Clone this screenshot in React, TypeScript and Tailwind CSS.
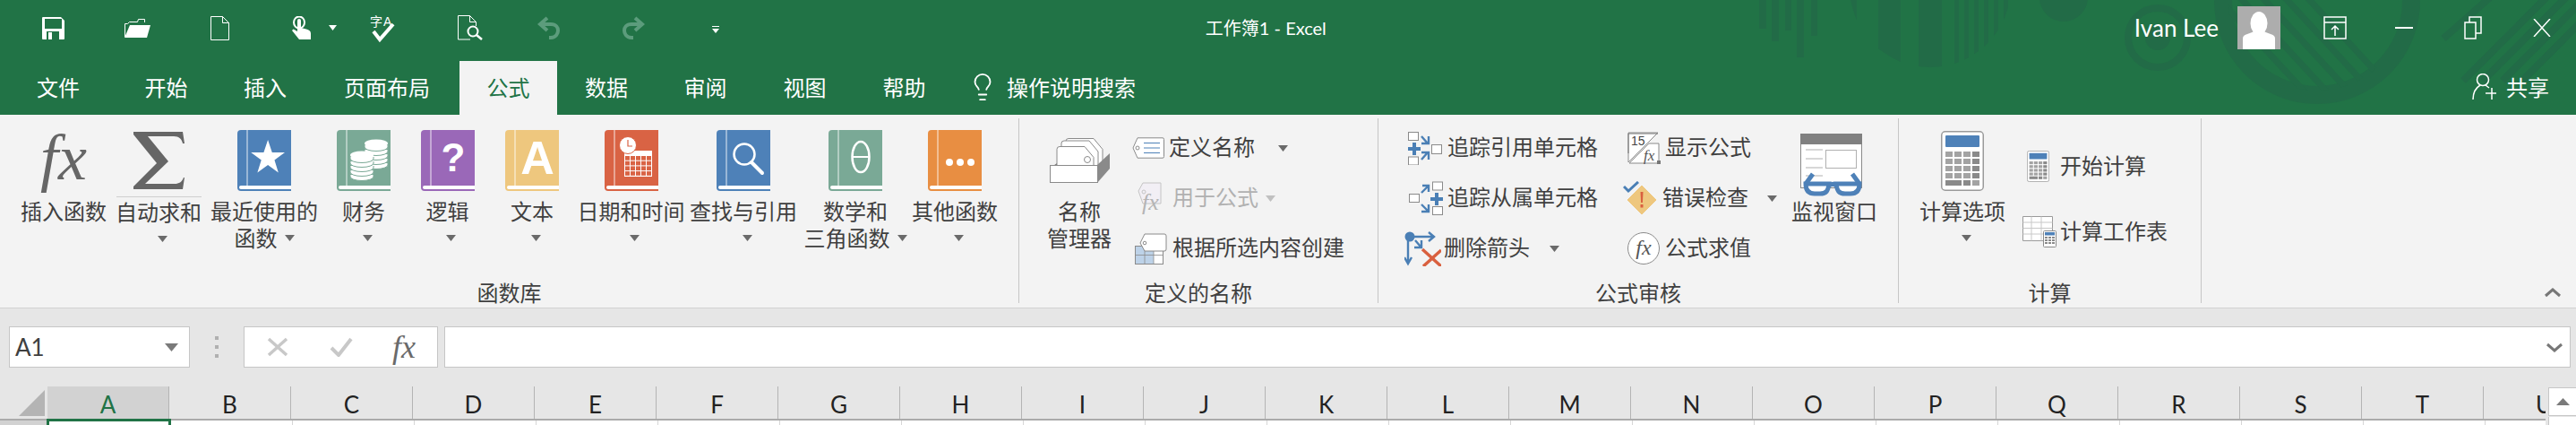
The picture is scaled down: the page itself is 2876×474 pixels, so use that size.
import type { ReactNode } from 'react';
import { Lightbulb } from 'lucide-react';

const COLUMNS = 'ABCDEFGHIJKLMNOPQRSTU'.split('');

const TABS = [
  { label: '文件', width: 'w-[130px]' },
  { label: '开始', width: 'w-[111px]' },
  { label: '插入', width: 'w-[110px]' },
  { label: '页面布局', width: 'w-[162px]' },
  { label: '公式', width: 'w-[109px]', active: true },
  { label: '数据', width: 'w-[110px]' },
  { label: '审阅', width: 'w-[111px]' },
  { label: '视图', width: 'w-[111px]' },
  { label: '帮助', width: 'w-[111px]' },
];

function Caret({ className = 'text-[#6a6a6a]' }: { className?: string }) {
  return (
    <svg width="11" height="7" viewBox="0 0 11 7" className={`shrink-0 ${className}`}>
      <path d="M0 0h11L5.5 7z" fill="currentColor" />
    </svg>
  );
}

function TitlePattern() {
  const stripes = [
    [2060, 13], [2097, 25], [2142, 26], [2182, 5], [2193, 5], [2204, 5], [2215, 5], [2226, 5], [2237, 5], [2247, 5],
  ];
  const bars = [
    [1964, 8, 32], [1978, 8, 46], [1993, 7, 34], [2006, 8, 64], [2022, 7, 40],
  ];
  const rings = [2490, 2515, 2540, 2565, 2590];
  const right = [2728, 2750, 2772, 2794, 2816];
  return (
    <svg className="absolute left-0 top-0 pointer-events-none" width="2876" height="128" viewBox="0 0 2876 128">
      <defs>
        <clipPath id="leftCircle"><circle cx="2155" cy="-15" r="90" /></clipPath>
        <clipPath id="bigCircle"><circle cx="2587" cy="1" r="100" /></clipPath>
      </defs>
      <g fill="#226b47" stroke="none">
        {bars.map(([x, w, h]) => <rect key={x} x={x} y="0" width={w} height={h} />)}
        <g clipPath="url(#leftCircle)">
          {stripes.map(([x, w]) => <rect key={x} x={x} y="-10" width={w} height="100" />)}
        </g>
        <circle cx="2304" cy="-3" r="27" />
        <circle cx="2409" cy="42" r="14" />
      </g>
      <g fill="none" stroke="#226b47">
        <circle cx="2409" cy="42" r="33" strokeWidth="8" />
        <circle cx="2587" cy="1" r="105" strokeWidth="20" />
        <g clipPath="url(#bigCircle)" strokeWidth="7">
          {rings.map((x) => <path key={x} d={`M${x - 30} -20L${x + 90} 110`} />)}
        </g>
        <g strokeWidth="8">
          {right.map((x, i) => <path key={x} d={`M${x} ${i === 0 ? 43 : 90}L${x + (i === 0 ? 60 : 100)} -10`} />)}
        </g>
      </g>
    </svg>
  );
}

function SaveIcon() {
  return (
    <svg width="25" height="25" viewBox="0 0 25 25">
      <path d="M1 0h20l4 4v20a1 1 0 0 1-1 1H1a1 1 0 0 1-1-1V1a1 1 0 0 1 1-1z" fill="#fff" />
      <rect x="3" y="2" width="19" height="11" fill="#217346" />
      <rect x="5" y="16" width="14" height="9" fill="#217346" />
      <rect x="7" y="17" width="4" height="8" fill="#fff" />
    </svg>
  );
}

function OpenIcon() {
  return (
    <svg width="29" height="21" viewBox="0 0 29 21">
      <path d="M.5 20V5.5h3l2-2h9l1-3h7V4" fill="none" stroke="#fff" strokeWidth="1" />
      <path d="M6 7h23l-4 14H0z" fill="#fff" />
    </svg>
  );
}

function PageIcon() {
  return (
    <svg width="21" height="27" viewBox="0 0 21 27" fill="none" stroke="#fff">
      <path d="M.5.5h13l7 7v19H.5zM13.5.5v7h7" />
    </svg>
  );
}

function TouchIcon() {
  return (
    <svg width="21" height="26" viewBox="0 0 21 26">
      <ellipse cx="8" cy="7" rx="6" ry="6.5" fill="none" stroke="#fff" strokeWidth="2" />
      <path d="M6 5a2 2 0 0 1 4 0v8l6 1.5c3 .8 5 2 5 5V26H8L0 16l1.5-1.5L6 17z" fill="#fff" />
    </svg>
  );
}

function SpellIcon() {
  return (
    <svg width="30" height="32" viewBox="0 0 30 32" className="overflow-visible">
      <text x="0" y="14" fontSize="14" fill="#fff">字</text>
      <text x="15" y="14" fontSize="14" fill="#fff" className="font-['Liberation_Sans',sans-serif]">A</text>
      <path d="M4 20l7 9L26 12" fill="none" stroke="#fff" strokeWidth="4" />
    </svg>
  );
}

function PreviewIcon() {
  return (
    <svg width="28" height="28" viewBox="0 0 28 28" fill="none" stroke="#fff">
      <path d="M14 27H.5V.5h13l7 7V12M13.5.5v7h7" />
      <circle cx="17" cy="18" r="5.5" strokeWidth="2" />
      <path d="M21 22l6 5" strokeWidth="2.5" />
    </svg>
  );
}

function UndoIcon({ flip = false }: { flip?: boolean }) {
  return (
    <svg width="26" height="26" viewBox="0 0 26 26" fill="none" stroke="#5c9c7c" strokeWidth="4" className={flip ? '-scale-x-100' : ''}>
      <path d="M11 2L3 9l8 7" />
      <path d="M4 9h11c6 0 8 4 8 7s-2 8-8 8h-2" />
    </svg>
  );
}

function BookIcon({ color, children }: { color: string; children: ReactNode }) {
  return (
    <svg width="60" height="68" viewBox="0 0 60 68">
      <path d="M4 0h56v68H4a4 4 0 0 1-4-4V4a4 4 0 0 1 4-4z" fill={color} />
      <path d="M11 0v62" stroke="#fff" strokeOpacity="0.85" strokeWidth="1" />
      <path d="M4 62h56v4H4a2 2 0 0 1 0-4z" fill="#fff" />
      {children}
    </svg>
  );
}

function CoinStack({ x, y, count, color }: { x: number; y: number; count: number; color: string }) {
  return (
    <g>
      {Array.from({ length: count }, (_, i) => count - 1 - i).map((i) => (
        <path key={i} d={`M${x - 13} ${y + 2 + i * 5}v2a13 4.5 0 0 0 26 0v-2`} fill="#fff" stroke={color} strokeWidth="1" />
      ))}
      <ellipse cx={x} cy={y} rx="13" ry="4.5" fill="#fff" />
    </g>
  );
}

function CalendarGlyph() {
  return (
    <g>
      <rect x="22" y="23" width="31" height="29" fill="#fff" />
      <g fill="#d96344">
        {[0, 1, 2, 3, 4].map((c) =>
          [0, 1, 2, 3].map((r) => <rect key={`${c}-${r}`} x={23 + c * 6} y={29 + r * 5.7} width="5" height="4.7" />),
        )}
      </g>
      <circle cx="26" cy="17" r="9.5" fill="#fff" stroke="#d96344" />
      <path d="M26 11v7h5" fill="none" stroke="#d96344" strokeWidth="1.2" />
    </g>
  );
}

function SigmaIcon() {
  return (
    <svg width="57" height="64" viewBox="0 0 57 64">
      <path d="M0 0h55l2 13h-2c-1-5-4-8-10-8H16l23 28-26 25h33c5 0 8-2 10-7h1l-2 13H0v-3l26-26L0 3z" fill="#666" />
    </svg>
  );
}

function NameManagerIcon() {
  const tag = 'M0 34V8a3 3 0 0 1 3-3h28l10 12v17z';
  return (
    <svg width="67" height="50" viewBox="0 0 67 50">
      <path d="M8 28l-7 5h7z" fill="#777" />
      <g fill="#fff" stroke="#8a8a8a">
        <path d={tag} transform="translate(18 -4.5)" />
        <path d={tag} transform="translate(13 -2)" />
        <path d={tag} transform="translate(8 4.5)" />
      </g>
      <circle cx="42" cy="24" r="3.5" fill="#fff" stroke="#8a8a8a" />
      <path d="M53 30l14-13v17L53 50z" fill="#8a8a8a" />
      <rect x="0.5" y="30.5" width="53" height="19" fill="#fff" stroke="#8a8a8a" />
    </svg>
  );
}

function DefineIcon() {
  return (
    <svg width="36" height="24" viewBox="0 0 36 24">
      <path d="M1 12L6 .8h28a1.5 1.5 0 0 1 1.5 1.5v19.4a1.5 1.5 0 0 1-1.5 1.5H6z" fill="#fff" stroke="#8a8a8a" />
      <circle cx="6" cy="12" r="2" fill="none" stroke="#8a8a8a" />
      <path d="M13 6.5h18M13 12h18M13 17.5h18" stroke="#4e81b8" strokeWidth="1.2" />
    </svg>
  );
}

function UseFormulaIcon() {
  return (
    <svg width="28" height="36" viewBox="0 0 28 36" className="overflow-visible">
      <path d="M1 10l5-9h20v23H6z" fill="#f2eff5" stroke="#c4c4c4" />
      <circle cx="7" cy="11" r="2" fill="none" stroke="#c4c4c4" />
      <text x="5" y="31" fontSize="26" fontStyle="italic" fill="#b4b4b4" className="font-['Liberation_Serif',serif]">fx</text>
    </svg>
  );
}

function FromSelectionIcon() {
  return (
    <svg width="36" height="35" viewBox="0 0 36 35">
      <rect x="0.5" y="14.5" width="31" height="20" fill="#fff" stroke="#8a8a8a" />
      <rect x="1" y="15" width="20" height="19" fill="#bdd2e8" />
      <path d="M11 15v19M21 15v19M1 24.5h30" stroke="#8a8a8a" strokeWidth="0.8" />
      <path d="M6 11l5-10h22a2 2 0 0 1 2 2v15a2 2 0 0 1-2 2H11z" fill="#fff" stroke="#8a8a8a" />
      <circle cx="11" cy="11" r="1.8" fill="none" stroke="#8a8a8a" />
    </svg>
  );
}

function TraceArrow({ d }: { d: string }) {
  return <path d={d} fill="none" stroke="#4a7fb5" strokeWidth="2.4" />;
}

function PrecedentsIcon() {
  return (
    <svg width="38" height="38" viewBox="0 0 38 38">
      <g fill="#fff" stroke="#8a8a8a">
        <rect x="0.5" y="1.5" width="11" height="9" />
        <rect x="26.5" y="15.5" width="11" height="10" />
        <rect x="0.5" y="29" width="11" height="9" />
      </g>
      <path d="M0 18h5v-5h4v5h5v4H9v5H5v-5H0z" fill="#4a7fb5" />
      <TraceArrow d="M15 6l7 8M23 6v8h-8M15 32l7-8M15 24h8v8" />
    </svg>
  );
}

function DependentsIcon() {
  return (
    <svg width="38" height="38" viewBox="0 0 38 38">
      <g fill="#fff" stroke="#8a8a8a">
        <rect x="26.5" y="1" width="11" height="9" />
        <rect x="0.5" y="14.5" width="11" height="9" />
        <rect x="26.5" y="28.5" width="11" height="9" />
      </g>
      <path d="M24 18h5v-5h4v5h5v4h-5v5h-4v-5h-5z" fill="#4a7fb5" />
      <TraceArrow d="M14 13l8-8M15 5h7v7M14 26l8 8M22 26v8h-8" />
    </svg>
  );
}

function RemoveArrowsIcon() {
  return (
    <svg width="41" height="39" viewBox="0 0 41 39">
      <circle cx="6" cy="6" r="5.5" fill="#4a7fb5" />
      <path d="M8 6h25M27 1l6 5-6 5M4 10v25M0 29l4 7 4-7M12 10l6 7M19 10v8h-8" fill="none" stroke="#4a7fb5" strokeWidth="2.4" />
      <path d="M20 20l21 19M41 21L21 39" stroke="#d9603f" strokeWidth="3.5" />
    </svg>
  );
}

function ShowFormulasIcon() {
  return (
    <svg width="38" height="37" viewBox="0 0 38 37">
      <path d="M1 34L34 1H1z" fill="#fff" stroke="#8a8a8a" />
      <path d="M1 24V2h33" fill="none" stroke="#777" />
      <path d="M2 35h33V13H24z" fill="#fff" stroke="#8a8a8a" />
      <text x="4" y="15" fontSize="14" fill="#444" className="font-['Liberation_Sans',sans-serif]">15</text>
      <text x="18" y="32" fontSize="17" fontStyle="italic" fill="#555" className="font-['Liberation_Serif',serif]">fx</text>
      <rect x="33" y="32" width="4" height="4" fill="#777" />
    </svg>
  );
}

function ErrorCheckIcon() {
  return (
    <svg width="38" height="38" viewBox="0 0 38 38">
      <path d="M21 5l16 16-16 16L5 21z" fill="#eec77e" stroke="#eec77e" strokeLinejoin="round" />
      <path d="M1 6l5 5L17 1" fill="none" stroke="#4a7fb5" strokeWidth="3" />
      <path d="M19.5 12h3l-.6 12h-1.8z" fill="#d9603f" />
      <rect x="19.5" y="26" width="3" height="3.5" fill="#d9603f" />
    </svg>
  );
}

function EvaluateIcon() {
  return (
    <svg width="36" height="36" viewBox="0 0 36 36">
      <circle cx="18" cy="18" r="17.5" fill="#fff" stroke="#8a8a8a" />
      <text x="18" y="25" fontSize="24" fontStyle="italic" fill="#555" textAnchor="middle" className="font-['Liberation_Serif',serif]">fx</text>
    </svg>
  );
}

function WatchIcon() {
  return (
    <svg width="76" height="70" viewBox="0 0 76 70" className="mt-[10px]">
      <rect x="0.5" y="0.5" width="68" height="60" fill="#fff" stroke="#8a8a8a" />
      <rect x="0" y="0" width="69" height="12" fill="#808080" />
      <rect x="28.5" y="18.5" width="34" height="20" fill="none" stroke="#b0b0b0" />
      <path d="M6 18h19M6 28h19M6 38h19M6 47h19" stroke="#b0b0b0" />
      <g fill="#fff" stroke="#4e81b8" strokeWidth="5">
        <path d="M6 56c0 8 4 11 10 11h6c7 0 9-3 10-11zM40 56c1 8 3 11 10 11h6c6 0 10-3 10-11z" />
        <path d="M32 58c3-2 6-2 8 0M6 56l8-11M66 56l-8-11" fill="none" />
      </g>
    </svg>
  );
}

function CalculatorIcon({ width, height }: { width: number; height: number }) {
  const rows = [0, 1, 2, 3];
  const cols = [0, 1, 2, 3];
  return (
    <svg width={width} height={height} viewBox="0 0 48 67">
      <rect x="0.75" y="0.75" width="46.5" height="65.5" rx="4" fill="#fff" stroke="#9a9a9a" strokeWidth="1.5" />
      <rect x="5" y="5" width="38" height="13" rx="1" fill="#4e81b8" />
      {rows.map((r) =>
        cols.map((c) => (
          <rect key={`${r}-${c}`} x={5 + c * 10} y={23 + r * 8} width="8" height="6" fill={c === 3 ? '#8a8a8a' : '#a3a3a3'} />
        )),
      )}
      <rect x="5" y="55" width="18" height="6" fill="#8a8a8a" />
      <rect x="25" y="55" width="8" height="6" fill="#8a8a8a" />
      <rect x="35" y="55" width="8" height="6" fill="#a3a3a3" />
    </svg>
  );
}

function SheetCalcIcon() {
  return (
    <svg width="38" height="35" viewBox="0 0 38 35">
      <path d="M.5.5h33v27H.5z" fill="#fff" stroke="#9a9a9a" />
      <path d="M.5 7h33M.5 13.5h33M.5 20h33M10 .5v27M21 .5v27" stroke="#c8c8c8" />
      <g transform="translate(23 16)">
        <rect x="0.5" y="0.5" width="14" height="18" rx="1" fill="#fff" stroke="#8a8a8a" />
        <rect x="2" y="2" width="11" height="3.5" fill="#4e81b8" />
        <path d="M2 8h11M2 11h11M2 14h11" stroke="#8a8a8a" strokeWidth="1.8" strokeDasharray="3 1" />
      </g>
    </svg>
  );
}

function UserGlyph() {
  return (
    <svg width="48" height="48" viewBox="0 0 48 48" className="bg-[#adadad] shrink-0">
      <ellipse cx="24" cy="19" rx="9.5" ry="13" fill="#fff" />
      <path d="M6 48V36c0-3 2-4 5-5l8-3h10l8 3c3 1 5 2 5 5v12z" fill="#fff" />
    </svg>
  );
}

function ShareIcon() {
  return (
    <svg width="28" height="30" viewBox="0 0 28 30" fill="none" stroke="#fff" strokeWidth="1.5">
      <ellipse cx="12" cy="7" rx="6.5" ry="6.5" />
      <path d="M1 29c0-8 3-13 8-16M15 13l4 3M22 16v13M15 22h12" />
    </svg>
  );
}

function LargeButton({
  width,
  icon,
  lines,
  caret = 'below',
  divider = false,
}: {
  width: string;
  icon: ReactNode;
  lines: string[];
  caret?: 'none' | 'below' | 'inline';
  divider?: boolean;
}) {
  return (
    <div className={`${width} shrink-0 flex flex-col items-center`}>
      <div className="h-[68px] flex items-center justify-center">{icon}</div>
      {divider ? <div className="mt-[6px] mb-[1px] h-px w-[95px] bg-[#cfcfcf]" /> : <div className="h-[7px]" />}
      <div className="h-[30px] leading-[30px] whitespace-nowrap">{lines[0]}</div>
      <div className="h-[30px] leading-[30px] flex items-center gap-[8px] whitespace-nowrap">
        {lines[1]}
        {caret === 'below' && <Caret className="text-[#6a6a6a] ml-[8px]" />}
        {caret === 'inline' && <Caret />}
      </div>
    </div>
  );
}

function SmallButton({
  rowHeight = 'h-[56px]',
  slot,
  icon,
  label,
  caret,
  muted = false,
}: {
  rowHeight?: string;
  slot: string;
  icon: ReactNode;
  label: string;
  caret?: string;
  muted?: boolean;
}) {
  return (
    <div className={`${rowHeight} flex items-center whitespace-nowrap ${muted ? 'text-[#b1b1b1]' : ''}`}>
      <div className={`${slot} shrink-0`}>{icon}</div>
      <span className="pb-[4px]">{label}</span>
      {caret && <Caret className={`${caret} ${muted ? 'text-[#c0c0c0]' : 'text-[#6a6a6a]'}`} />}
    </div>
  );
}

function RibbonGroup({ width, label, children }: { width: string; label: string; children: ReactNode }) {
  return (
    <div className={`${width} shrink-0 h-[206px] flex flex-col border-r border-[#c6c6c6]`}>
      <div className="flex-1 flex min-h-0">{children}</div>
      <div className="h-[22px] leading-[20px] text-center whitespace-nowrap">{label}</div>
    </div>
  );
}

function Ribbon() {
  return (
    <div className="relative h-[216px] bg-[#f3f3f3] border-b border-[#d2d2d2] pt-[4px] flex text-[24px] text-[#404040]">
      <RibbonGroup width="w-[1138px]" label="函数库">
        <div className="flex pt-[13px] pl-[17px]">
          <LargeButton
            width="w-[108px]"
            caret="none"
            lines={['插入函数']}
            icon={<span className="mb-[6px] font-['Liberation_Serif',serif] italic text-[72px] leading-none text-[#666]">fx</span>}
          />
          <LargeButton width="w-[104px]" divider lines={['自动求和']} icon={<SigmaIcon />} />
          <LargeButton
            width="w-[132px]"
            caret="inline"
            lines={['最近使用的', '函数']}
            icon={
              <BookIcon color="#4e81b8">
                <path d="M34 9l5.2 15.500H55l-12.800 9.500 4.800 15.500-13-9.500-13 9.500 4.800-15.500L13 24.500h15.800z" fill="#fff" transform="translate(3.5 3) scale(.9)" />
              </BookIcon>
            }
          />
          <LargeButton
            width="w-[90px]"
            lines={['财务']}
            icon={
              <BookIcon color="#7aa996">
                <CoinStack x={44} y={15} count={5} color="#7aa996" />
                <CoinStack x={28} y={28} count={5} color="#7aa996" />
              </BookIcon>
            }
          />
          <LargeButton
            width="w-[97px]"
            lines={['逻辑']}
            icon={
              <BookIcon color="#9a68b8">
                <text x="36" y="46" fontSize="44" fontWeight="bold" fill="#fff" textAnchor="middle" className="font-['Liberation_Sans',sans-serif]">?</text>
              </BookIcon>
            }
          />
          <LargeButton
            width="w-[92px]"
            lines={['文本']}
            icon={
              <BookIcon color="#eec77e">
                <text x="36" y="49" fontSize="52" fontWeight="bold" fill="#fff" textAnchor="middle" className="font-['Liberation_Sans',sans-serif]">A</text>
              </BookIcon>
            }
          />
          <LargeButton
            width="w-[129px]"
            lines={['日期和时间']}
            icon={
              <BookIcon color="#d96344">
                <CalendarGlyph />
              </BookIcon>
            }
          />
          <LargeButton
            width="w-[122px]"
            lines={['查找与引用']}
            icon={
              <BookIcon color="#4e81b8">
                <circle cx="31" cy="27" r="11.5" fill="none" stroke="#fff" strokeWidth="2.5" />
                <path d="M39 36l12 12" stroke="#fff" strokeWidth="4" strokeLinecap="round" />
              </BookIcon>
            }
          />
          <LargeButton
            width="w-[128px]"
            caret="inline"
            lines={['数学和', '三角函数']}
            icon={
              <BookIcon color="#7aa996">
                <ellipse cx="36" cy="30" rx="9.5" ry="17" fill="none" stroke="#fff" strokeWidth="2.5" />
                <path d="M27 30h18" stroke="#fff" strokeWidth="2" />
              </BookIcon>
            }
          />
          <LargeButton
            width="w-[94px]"
            lines={['其他函数']}
            icon={
              <BookIcon color="#e88e42">
                <circle cx="24" cy="36" r="4" fill="#fff" />
                <circle cx="36" cy="36" r="4" fill="#fff" />
                <circle cx="48" cy="36" r="4" fill="#fff" />
              </BookIcon>
            }
          />
        </div>
      </RibbonGroup>

      <RibbonGroup width="w-[401px]" label="定义的名称">
        <div className="flex pt-[13px] pl-[21px]">
          <LargeButton width="w-[92px]" caret="none" lines={['名称', '管理器']} icon={<NameManagerIcon />} />
        </div>
        <div className="ml-[11px] pt-[5px]">
          <SmallButton slot="w-[43px] pl-[2px]" icon={<DefineIcon />} label="定义名称" caret="ml-[26px]" />
          <SmallButton slot="w-[47px] pl-[8px]" icon={<UseFormulaIcon />} label="用于公式" caret="ml-[8px]" muted />
          <SmallButton slot="w-[47px] pl-[5px]" icon={<FromSelectionIcon />} label="根据所选内容创建" />
        </div>
      </RibbonGroup>

      <RibbonGroup width="w-[581px]" label="公式审核">
        <div className="ml-[29px] w-[244px] shrink-0 pt-[5px]">
          <SmallButton slot="w-[48px] pl-[4px]" icon={<PrecedentsIcon />} label="追踪引用单元格" />
          <SmallButton slot="w-[48px] pl-[5px]" icon={<DependentsIcon />} label="追踪从属单元格" />
          <SmallButton slot="w-[44px]" icon={<RemoveArrowsIcon />} label="删除箭头" caret="ml-[22px]" />
        </div>
        <div className="w-[186px] shrink-0 pt-[5px]">
          <SmallButton slot="w-[47px] pl-[5px]" icon={<ShowFormulasIcon />} label="显示公式" />
          <SmallButton slot="w-[44px]" icon={<ErrorCheckIcon />} label="错误检查" caret="ml-[21px]" />
          <SmallButton slot="w-[47px] pl-[5px]" icon={<EvaluateIcon />} label="公式求值" />
        </div>
        <div className="pt-[13px]">
          <LargeButton width="w-[100px]" caret="none" lines={['监视窗口']} icon={<WatchIcon />} />
        </div>
      </RibbonGroup>

      <RibbonGroup width="w-[338px]" label="计算">
        <div className="flex pt-[13px] pl-[21px]">
          <LargeButton width="w-[100px]" lines={['计算选项']} icon={<CalculatorIcon width={48} height={67} />} />
        </div>
        <div className="ml-[17px] pt-[17px]">
          <SmallButton rowHeight="h-[73px]" slot="w-[42px] pl-[5px]" icon={<CalculatorIcon width={25} height={35} />} label="开始计算" />
          <SmallButton rowHeight="h-[73px]" slot="w-[42px]" icon={<SheetCalcIcon />} label="计算工作表" />
        </div>
      </RibbonGroup>

      <svg width="18" height="11" viewBox="0 0 18 11" className="absolute right-[17px] bottom-[11px]">
        <path d="M1 9l8-7 8 7" fill="none" stroke="#777" strokeWidth="3" />
      </svg>
    </div>
  );
}

function FormulaBar() {
  return (
    <div className="h-[87px] bg-[#e6e6e6] pt-[20px] pl-[10px] pr-[6px] flex items-start">
      <div className="w-[202px] h-[46px] bg-white border border-[#c6c6c6] flex items-center justify-between pl-[6px] pr-[12px] text-[26px] text-[#404040] font-['Lato',sans-serif]">
        <span>A1</span>
        <svg width="15" height="9" viewBox="0 0 15 9"><path d="M0 0h15L7.5 9z" fill="#7a7a7a" /></svg>
      </div>
      <div className="w-[60px] h-[46px] flex flex-col items-center justify-center gap-[6px]">
        <div className="w-[4px] h-[4px] bg-[#b0b0b0]" />
        <div className="w-[4px] h-[4px] bg-[#b0b0b0]" />
        <div className="w-[4px] h-[4px] bg-[#b0b0b0]" />
      </div>
      <div className="w-[217px] h-[46px] bg-white border border-[#c6c6c6] flex items-center">
        <svg width="24" height="22" viewBox="0 0 24 22" className="ml-[25px]">
          <path d="M2 2l20 18M22 2L2 20" stroke="#c8c8c8" strokeWidth="3.5" />
        </svg>
        <svg width="26" height="22" viewBox="0 0 26 22" className="ml-[46px]">
          <path d="M2 12l8 8L24 2" fill="none" stroke="#c8c8c8" strokeWidth="4" />
        </svg>
        <span className="ml-[44px] font-['Liberation_Serif',serif] italic text-[36px] leading-none text-[#6a6a6a]">fx</span>
      </div>
      <div className="flex-1 ml-[7px] h-[46px] bg-white border border-[#c6c6c6] flex items-center justify-end pr-[8px]">
        <svg width="18" height="11" viewBox="0 0 18 11">
          <path d="M1 2l8 7 8-7" fill="none" stroke="#777" strokeWidth="3" />
        </svg>
      </div>
    </div>
  );
}

function Grid() {
  return (
    <div className="h-[43px] bg-[#e6e6e6] flex overflow-hidden">
      <div className="w-[2842px] shrink-0 overflow-hidden">
        <div className="h-[36px] flex border-b-2 border-[#ababab] box-content">
          <div className="w-[53px] shrink-0 flex items-end justify-end pr-[3px] pb-[3px]">
            <svg width="29" height="29" viewBox="0 0 29 29"><path d="M29 0v29H0z" fill="#b4b4b4" /></svg>
          </div>
          {COLUMNS.map((col, i) => (
            <div
              key={col}
              className={`w-[136px] shrink-0 pt-[4px] text-center text-[26px] leading-[32px] border-r border-[#b4b4b4] font-['Lato',sans-serif] ${
                i === 0 ? 'bg-[#d2d2d2] text-[#217346]' : 'text-[#222]'
              }`}
            >
              {col}
            </div>
          ))}
        </div>
        <div className="flex h-[8px] bg-white">
          <div className="w-[52px] shrink-0 bg-[#d2d2d2]" />
          <div className="relative w-[139px] shrink-0 -mt-[2px] h-[10px] border-[3px] border-[#217346] bg-white" />
          {COLUMNS.slice(1).map((col) => (
            <div key={col} className="w-[136px] shrink-0 border-r border-[#d6d6d6]" />
          ))}
        </div>
      </div>
      <div className="ml-[3px] flex-1 pt-px">
        <div className="h-[32px] bg-white border border-[#c6c6c6] border-r-0 flex items-center justify-center">
          <svg width="15" height="8" viewBox="0 0 15 8"><path d="M7.5 0L15 8H0z" fill="#7a7a7a" /></svg>
        </div>
        <div className="h-[9px] mt-px bg-white border-l border-[#c6c6c6]" />
      </div>
    </div>
  );
}

export default function App() {
  return (
    <div className="w-[2876px] h-[474px] overflow-hidden font-['Noto_Sans_CJK_SC','Lato',sans-serif]">
      <div className="relative h-[128px] bg-[#217346] text-white">
        <TitlePattern />
        <div className="relative h-[62px] flex items-center pl-[14px]">
          <div className="w-[92px] flex justify-center"><SaveIcon /></div>
          <div className="w-[96px] flex justify-center"><OpenIcon /></div>
          <div className="w-[88px] flex justify-center"><PageIcon /></div>
          <div className="w-[94px] flex items-center pl-[37px]">
            <TouchIcon />
            <svg width="9" height="6" viewBox="0 0 9 6" className="ml-[20px]"><path d="M0 0h9L4.5 6z" fill="#fff" /></svg>
          </div>
          <div className="w-[90px] flex justify-center"><SpellIcon /></div>
          <div className="w-[104px] flex justify-center"><PreviewIcon /></div>
          <div className="w-[74px] flex justify-center"><UndoIcon /></div>
          <div className="w-[114px] flex justify-center"><UndoIcon flip /></div>
          <div className="w-[70px] flex flex-col items-center gap-[2px] pt-[4px]">
            <div className="w-[8px] h-[1px] bg-white" />
            <svg width="8" height="5" viewBox="0 0 8 5"><path d="M0 0h8L4 5z" fill="#fff" /></svg>
          </div>
          <div className="ml-[512px] w-[130px] text-[20px] whitespace-nowrap font-['Lato','Noto_Sans_CJK_SC',sans-serif]">工作簿1 - Excel</div>
          <div className="ml-[907px] w-[94px] text-[26px] whitespace-nowrap font-['Lato',sans-serif]">Ivan Lee</div>
          <div className="ml-[21px]"><UserGlyph /></div>
          <div className="ml-[23px] w-[77px] flex justify-center">
            <svg width="26" height="26" viewBox="0 0 26 26" fill="none" stroke="#fff" strokeWidth="1.5">
              <path d="M1 1h24v24H1zM1 7h24M13 22V11M9 15l4-4 4 4" />
            </svg>
          </div>
          <div className="w-[77px] flex justify-center"><div className="w-[20px] h-[2px] bg-white" /></div>
          <div className="w-[77px] flex justify-center">
            <svg width="20" height="26" viewBox="0 0 20 26" fill="none" stroke="#fff" strokeWidth="1.5">
              <path d="M1 7h12v18H1zM6 7V1h13v18h-6" />
            </svg>
          </div>
          <div className="w-[77px] flex justify-center">
            <svg width="20" height="20" viewBox="0 0 20 20" stroke="#fff" strokeWidth="1.5"><path d="M1 0l18 20M19 0L1 20" /></svg>
          </div>
        </div>
        <div className="relative h-[66px] flex items-end text-[24px]">
          {TABS.map((tab) => (
            <div
              key={tab.label}
              className={`${tab.width} h-[60px] pb-[2px] flex items-center justify-center ${
                tab.active ? 'bg-[#f3f3f3] text-[#217346]' : ''
              }`}
            >
              {tab.label}
            </div>
          ))}
          <div className="h-[60px] pb-[2px] flex items-center ml-[15px] gap-[10px]">
            <Lightbulb size={34} strokeWidth={1.3} />
            <span>操作说明搜索</span>
          </div>
          <div className="ml-auto h-[60px] pb-[2px] pr-[30px] flex items-center gap-[10px]">
            <ShareIcon />
            <span>共享</span>
          </div>
        </div>
      </div>
      <Ribbon />
      <FormulaBar />
      <Grid />
    </div>
  );
}
